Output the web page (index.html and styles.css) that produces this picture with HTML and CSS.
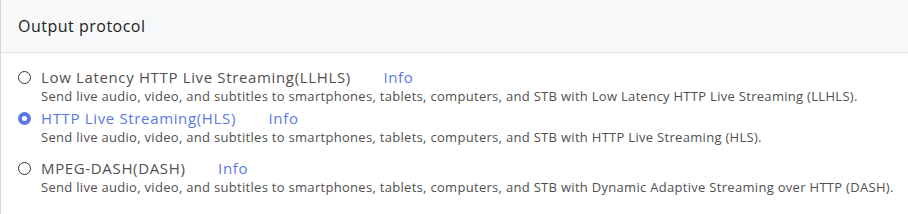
FILE: index.html
```html
<!DOCTYPE html>
<html lang="en">
<head>
    <meta charset="UTF-8">
    <title>Output protocol</title>
    <link rel="stylesheet" href="styles.css">
</head>
<body>
    <div class="panel">
        <div class="panel-header">Output protocol</div>
        <div class="panel-body">
            <label class="option">
                <input type="radio" name="protocol" value="llhls">
                <span class="option-text">
                    <span class="option-title">Low Latency HTTP Live Streaming(LLHLS) <a class="info" href="#">Info</a></span>
                    <span class="option-desc">Send live audio, video, and subtitles to smartphones, tablets, computers, and STB with Low Latency HTTP Live Streaming (LLHLS).</span>
                </span>
            </label>
            <label class="option selected">
                <input type="radio" name="protocol" value="hls" checked>
                <span class="option-text">
                    <span class="option-title">HTTP Live Streaming(HLS) <a class="info" href="#">Info</a></span>
                    <span class="option-desc">Send live audio, video, and subtitles to smartphones, tablets, computers, and STB with HTTP Live Streaming (HLS).</span>
                </span>
            </label>
            <label class="option">
                <input type="radio" name="protocol" value="dash">
                <span class="option-text">
                    <span class="option-title">MPEG-DASH(DASH) <a class="info" href="#">Info</a></span>
                    <span class="option-desc">Send live audio, video, and subtitles to smartphones, tablets, computers, and STB with Dynamic Adaptive Streaming over HTTP (DASH).</span>
                </span>
            </label>
        </div>
    </div>
</body>
</html>
```

FILE: styles.css
```css
body {
    margin: 0;
    font-family: "Open Sans", Lato, sans-serif;
    background: white;
}
.panel {
    border-left: 1px solid #d4d7dc;
    height: 214px;
}
.panel-header {
    background: #f7f8fa;
    border-bottom: 1px solid #dde0e4;
    height: 52px;
    line-height: 52px;
    padding-left: 17px;
    font-size: 16px;
    letter-spacing: 0.5px;
    color: #1c1e21;
}
.panel-body {
    padding: 14px 0 0 17px;
}
.option {
    display: flex;
    align-items: flex-start;
    cursor: pointer;
}
.option input {
    appearance: none;
    width: 13px;
    height: 13px;
    margin: 4px 10px 0 0;
    border: 1px solid #333;
    border-radius: 50%;
    flex-shrink: 0;
}
.option input:checked {
    border: 4px solid #5b78e6;
    background: white;
}
.option-text {
    display: flex;
    flex-direction: column;
}
.option-title {
    font-size: 15px;
    letter-spacing: 0.65px;
    color: #505050;
    line-height: 20px;
}
.selected .option-title {
    color: #5b78e6;
}
.info {
    color: #5b78e6;
    text-decoration: none;
    margin-left: 28px;
}
.option-desc {
    font-size: 13px;
    letter-spacing: 0.3px;
    color: #505050;
    line-height: 19px;
}
.option + .option {
    margin-top: 2px;
}
.option.selected + .option {
    margin-top: 11px;
}
```
